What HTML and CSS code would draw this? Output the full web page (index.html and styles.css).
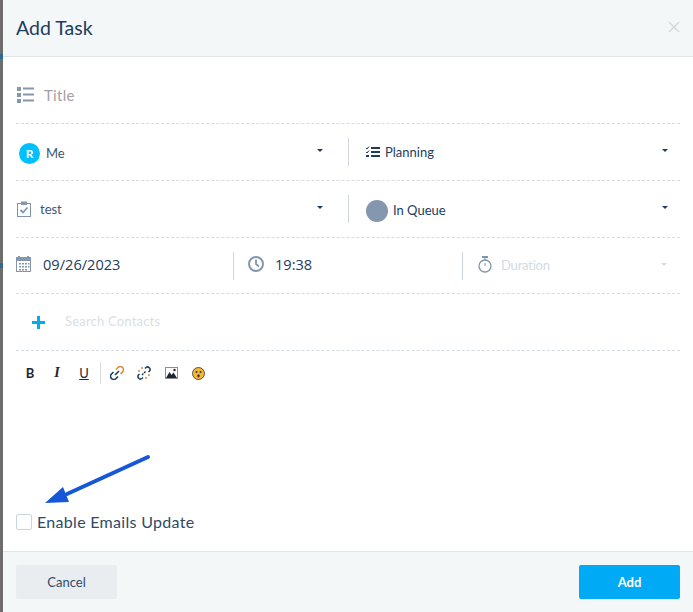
FILE: index.html
```html
<!DOCTYPE html>
<html lang="en">
  <head>
    <meta charset="UTF-8" />
    <meta name="viewport" content="width=device-width, initial-scale=1.0" />
    <title>Add Task</title>
    <link rel="stylesheet" href="styles.css">
  </head>
  <body>
    <div class="backdrop-mark mark-one"></div>
    <div class="backdrop-mark mark-two"></div>

    <div class="modal">
      <div class="modal-header">
        <h1>Add Task</h1>
        <svg class="close" width="12" height="12" viewBox="0 0 12 12"><path d="M1 1l10 10M11 1L1 11" stroke="#d4d7da" stroke-width="1.4" fill="none"/></svg>
      </div>

      <div class="modal-body">
        <div class="row row-title">
          <svg class="title-icon" width="17" height="16" viewBox="0 0 17 16" fill="#8497ae">
            <rect x="0" y="0" width="4" height="4"/><rect x="6" y="0.500" width="11" height="2"/>
            <rect x="0" y="6" width="4" height="4"/><rect x="6" y="6.500" width="11" height="2"/>
            <rect x="0" y="12" width="4" height="4"/><rect x="6" y="12.500" width="11" height="2"/>
          </svg>
          <span class="title-text">Title</span>
        </div>

        <div class="row row-split">
          <div class="cell cell-left">
            <span class="avatar">R</span>
            <span class="value value-low">Me</span>
            <span class="caret"></span>
          </div>
          <div class="cell cell-right">
            <svg class="plan-icon" width="14" height="12" viewBox="0 0 14 12" fill="#1c3d5e">
              <rect x="5" y="1" width="9" height="2"/><rect x="5" y="5" width="9" height="2"/><rect x="5" y="9" width="9" height="2"/>
              <path d="M0 2l1 1 2-2.500" stroke="#1c3d5e" fill="none"/><path d="M0 6l1 1 2-2.500" stroke="#1c3d5e" fill="none"/>
              <rect x="0" y="9" width="3" height="2"/>
            </svg>
            <span class="value dark">Planning</span>
            <span class="caret"></span>
          </div>
        </div>

        <div class="row row-split">
          <div class="cell cell-left">
            <svg class="task-icon" width="15" height="16" viewBox="0 0 15 16" fill="none">
              <rect x="0.500" y="2.500" width="13" height="13" stroke="#7f93aa"/>
              <rect x="4" y="0.500" width="6" height="3.500" fill="#8497ae"/>
              <path d="M3.500 9l2.500 2.500 4.500-5" stroke="#8497ae" stroke-width="1.800"/>
            </svg>
            <span class="value">test</span>
            <span class="caret"></span>
          </div>
          <div class="cell cell-right">
            <span class="status-dot"></span>
            <span class="value dark value-low">In Queue</span>
            <span class="caret"></span>
          </div>
        </div>

        <div class="row row-date">
          <div class="date-cell">
            <svg width="15" height="16" viewBox="0 0 15 16" fill="#8497ae">
              <path d="M0 1h2V0h2v1h7V0h2v1h2v15H0z"/>
              <rect x="1" y="5" width="13" height="10" fill="#fff"/>
              <path d="M3 7h2v1.500H3zM6 7h2v1.500H6zM9 7h2v1.500H9zM12 7h1.500v1.500H12zM3 10h2v1.500H3zM6 10h2v1.500H6zM9 10h2v1.500H9zM12 10h1.500v1.500H12zM3 13h2v1.500H3zM6 13h2v1.500H6zM9 13h2v1.500H9z"/>
            </svg>
            <span class="date-text">09/26/2023</span>
          </div>
          <div class="time-cell">
            <svg width="16" height="16" viewBox="0 0 16 16" fill="none" stroke="#8497ae" stroke-width="2">
              <circle cx="8" cy="8" r="7"/><path d="M8 3.500V8l3 2.500" stroke-width="1.800"/>
            </svg>
            <span class="date-text">19:38</span>
          </div>
          <div class="duration-cell">
            <svg width="14" height="17" viewBox="0 0 14 17" fill="none" stroke="#7f95ad">
              <circle cx="7" cy="10" r="6" stroke-width="1.300"/><path d="M4 1h6" stroke-width="2"/><path d="M7 1v3M7 7v3"/>
            </svg>
            <span class="duration-text">Duration</span>
            <span class="caret caret-light"></span>
          </div>
        </div>

        <div class="row row-contacts">
          <span class="plus"></span>
          <span class="search-text">Search Contacts</span>
        </div>

        <div class="toolbar">
          <span class="tool tool-b">B</span>
          <span class="tool tool-i">I</span>
          <span class="tool tool-u">U</span>
          <span class="tool-sep"></span>
          <svg class="tool-svg" width="14" height="14" viewBox="0 0 14 14" fill="none" stroke-width="1.600">
            <path d="M6 3.500l2-2a2.500 2.500 0 0 1 4.500 4.500l-2 2" stroke="#d98a3a"/>
            <path d="M8 10.500l-2 2A2.500 2.500 0 0 1 1.500 8l2-2" stroke="#1c3d5e"/>
            <path d="M5 9l4-4" stroke="#1c3d5e"/>
          </svg>
          <svg class="tool-svg" width="14" height="14" viewBox="0 0 14 14" fill="none" stroke-width="1.500">
            <path d="M8 2.500l1-1a2.500 2.500 0 0 1 3.500 3.500l-1 1" stroke="#1c3d5e"/>
            <path d="M6 11.500l-1 1A2.500 2.500 0 0 1 1.500 9l1-1" stroke="#1c3d5e"/>
            <path d="M5 1v2M1 5h2M13 9h-2M9 13v-2" stroke="#d98a3a"/>
            <path d="M5 9l4-4" stroke="#1c3d5e" stroke-dasharray="2 1"/>
          </svg>
          <svg class="tool-svg tool-image" width="13" height="12" viewBox="0 0 13 12">
            <rect x="0.500" y="0.500" width="12" height="11" fill="#fff" stroke="#8b8f94"/>
            <path d="M1 11l3.500-6 2 3 2-2.500L12 11z" fill="#1d2733"/>
            <circle cx="9.500" cy="3" r="1.200" fill="#1d2733"/>
          </svg>
          <svg class="tool-svg" width="13" height="13" viewBox="0 0 13 13">
            <circle cx="6.500" cy="6.500" r="6" fill="#f7b731" stroke="#33312c" stroke-width="0.800"/>
            <circle cx="4.500" cy="5" r="1" fill="#33312c"/><circle cx="8.500" cy="5" r="1" fill="#33312c"/>
            <ellipse cx="6.500" cy="8.800" rx="1.200" ry="1.600" fill="#33312c"/>
          </svg>
        </div>

        <div class="editor-space">
          <svg class="arrow" width="108" height="52" viewBox="0 0 108 52">
            <path d="M105 4L24 41" stroke="#1557d6" stroke-width="4" stroke-linecap="round" fill="none"/>
            <path d="M2 50L20 34l6 15z" fill="#1557d6"/>
          </svg>
        </div>

        <label class="email-check">
          <span class="box"></span>
          <span class="email-text">Enable Emails Update</span>
        </label>
      </div>

      <div class="modal-footer">
        <button class="btn btn-cancel">Cancel</button>
        <button class="btn btn-add">Add</button>
      </div>
    </div>
  </body>
</html>
```

FILE: styles.css
```css
html,
body {
  margin: 0;
  padding: 0;
  height: 100%;
}

body {
  position: relative;
  width: 693px;
  height: 612px;
  overflow: hidden;
  background-color: #6d6d6d;
  font-family: Lato, Arial, sans-serif;
  color: #2e4a68;
}

.backdrop-mark {
  position: absolute;
  left: 0;
  width: 3px;
  height: 5px;
  background-color: #2a6a94;
}

.mark-one {
  top: 54px;
}

.mark-two {
  top: 263px;
}

.modal {
  box-sizing: border-box;
  margin-left: 3px;
  width: 690px;
  height: 612px;
  background-color: #fff;
  display: flex;
  flex-direction: column;
}

.modal-header {
  box-sizing: border-box;
  height: 57px;
  padding: 0 13px;
  background-color: #f4f7f8;
  border-bottom: 1px solid #e3e6e8;
  display: flex;
  align-items: center;
  justify-content: space-between;
}

.modal-header h1 {
  margin: 0 0 2px 0;
  font-size: 19.5px;
  font-weight: 400;
  color: #1c3d5e;
}

.close {
  margin-bottom: 2px;
}

.modal-body {
  flex: 1;
  padding: 0 13px;
  display: flex;
  flex-direction: column;
}

.row {
  box-sizing: border-box;
  border-bottom: 1px dashed #d5dbe1;
  display: flex;
  align-items: center;
}

.row-title {
  height: 67px;
  padding-left: 1px;
  padding-top: 9px;
}

.title-icon {
  margin-right: 11px;
}

.title-text {
  font-size: 15px;
  color: #a79ea4;
  letter-spacing: 0.3px;
  margin-left: -1px;
}

.row-split {
  height: 57px;
}

.cell {
  display: flex;
  align-items: center;
  height: 28px;
}

.cell-left {
  width: 332px;
  padding-left: 3px;
  box-sizing: border-box;
  padding-right: 25px;
}

.cell-right {
  flex: 1;
  box-sizing: border-box;
  border-left: 1px solid #cdd6df;
  padding-left: 17px;
  padding-right: 12px;
}

.avatar {
  width: 21px;
  height: 21px;
  border-radius: 50%;
  background-color: #00bfff;
  color: #fff;
  font-size: 12px;
  font-weight: 700;
  display: flex;
  align-items: center;
  justify-content: center;
  margin-right: 6px;
  margin-top: 3px;
}

.value {
  flex: 1;
  font-size: 13px;
  color: #3c5674;
}

.value.dark {
  color: #1c3d5e;
}

.value-low {
  margin-top: 2px;
}

.caret {
  width: 0;
  height: 0;
  border-left: 3px solid transparent;
  border-right: 3px solid transparent;
  border-top: 3px solid #1c3d5e;
  margin-bottom: 4px;
}

.caret-light {
  border-top-color: #d3dbe3;
  margin-bottom: 0;
}

.task-icon {
  margin-right: 8px;
  margin-left: -2px;
}

.plan-icon {
  margin-right: 5px;
}

.status-dot {
  width: 22px;
  height: 22px;
  border-radius: 50%;
  background-color: #8497ae;
  margin-right: 5px;
  margin-top: 3px;
}

.row-date {
  height: 56px;
}

.date-cell,
.time-cell,
.duration-cell {
  box-sizing: border-box;
  display: flex;
  align-items: center;
  height: 28px;
}

.date-cell {
  width: 217px;
  gap: 12px;
  padding-bottom: 4px;
}

.time-cell {
  width: 229px;
  gap: 11px;
  border-left: 1px solid #cdd6df;
  padding-left: 14px;
  padding-bottom: 4px;
}

.duration-cell {
  flex: 1;
  gap: 9px;
  border-left: 1px solid #cdd6df;
  padding-left: 15px;
  padding-right: 13px;
  padding-bottom: 2px;
}

.date-text {
  font-family: "Open Sans", Arial, sans-serif;
  font-size: 14.6px;
  color: #1c3d5e;
}

.duration-text {
  flex: 1;
  font-size: 13px;
  color: #d3dbe3;
  letter-spacing: -0.2px;
}

.row-contacts {
  height: 57px;
  padding-left: 16px;
  padding-bottom: 2px;
}

.plus {
  width: 13px;
  height: 13px;
  margin-right: 20px;
  margin-top: 2px;
  background:
    linear-gradient(#00aeef, #00aeef) center / 13px 3px no-repeat,
    linear-gradient(#00aeef, #00aeef) center / 3px 13px no-repeat;
}

.search-text {
  font-size: 13px;
  color: #d8dfe6;
  letter-spacing: 0.2px;
}

.toolbar {
  height: 44px;
  display: flex;
  align-items: center;
  padding-left: 7px;
}

.tool {
  width: 14px;
  margin-right: 13px;
  text-align: center;
  font-size: 13px;
  color: #1d2733;
}

.tool-b {
  font-weight: 700;
}

.tool-i {
  font-family: "Liberation Serif", serif;
  font-style: italic;
  font-weight: 700;
  font-size: 14px;
}

.tool-u {
  text-decoration: underline;
  margin-right: 9px;
}

.tool-sep {
  width: 1px;
  height: 22px;
  background-color: #d5dbe1;
  margin-right: 9px;
}

.tool-svg {
  margin-right: 13px;
}

.tool-image {
  margin-left: 1px;
  margin-right: 14px;
}

.editor-space {
  flex: 1;
  position: relative;
}

.arrow {
  position: absolute;
  left: 27px;
  top: 58px;
}

.email-check {
  display: flex;
  align-items: center;
  gap: 5px;
  margin-bottom: 20px;
  font-size: 16px;
  letter-spacing: 0.3px;
  color: #2e4a68;
}

.box {
  box-sizing: border-box;
  width: 16px;
  height: 16px;
  border: 1px solid #c9d5e1;
  border-radius: 2px;
}

.modal-footer {
  box-sizing: border-box;
  height: 61px;
  padding: 13px 13px 13px;
  background-color: #f4f7f8;
  border-top: 1px solid #e3e6e8;
  display: flex;
  justify-content: space-between;
}

.btn {
  height: 34px;
  border: none;
  border-radius: 2px;
  font-family: Lato, Arial, sans-serif;
  font-size: 13px;
  padding: 0;
}

.btn-cancel {
  width: 101px;
  background-color: #e9edef;
  color: #2e4a68;
}

.btn-add {
  width: 101px;
  background-color: #00aaf5;
  color: #fff;
  font-weight: 700;
}
```
